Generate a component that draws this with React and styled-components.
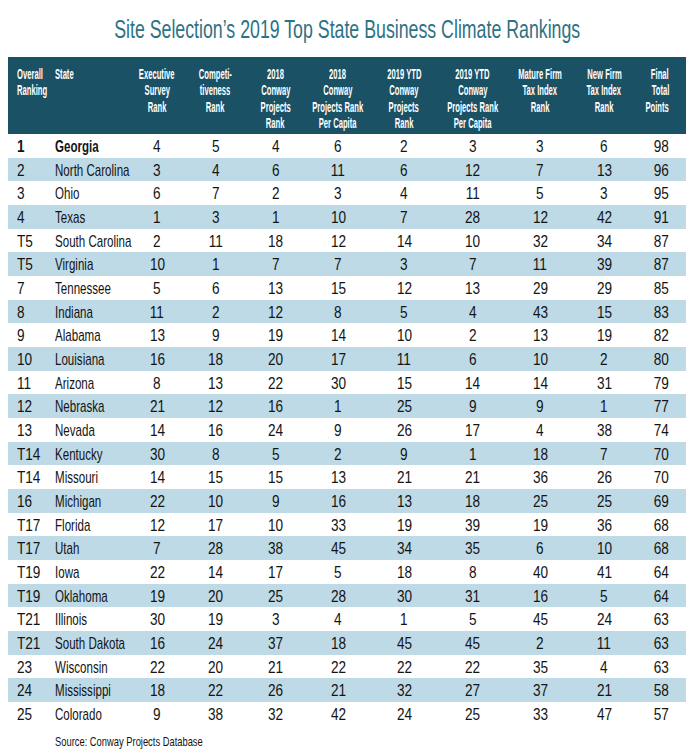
import React from 'react'
import styled, { createGlobalStyle } from 'styled-components'

const GlobalStyle = createGlobalStyle`
  html, body {
    margin: 0;
    padding: 0;
    background: #ffffff;
  }
  body {
    font-family: "Liberation Sans", Arial, sans-serif;
  }
`

const rows = [
  ['1', 'Georgia', 4, 5, 4, 6, 2, 3, 3, 6, 98],
  ['2', 'North Carolina', 3, 4, 6, 11, 6, 12, 7, 13, 96],
  ['3', 'Ohio', 6, 7, 2, 3, 4, 11, 5, 3, 95],
  ['4', 'Texas', 1, 3, 1, 10, 7, 28, 12, 42, 91],
  ['T5', 'South Carolina', 2, 11, 18, 12, 14, 10, 32, 34, 87],
  ['T5', 'Virginia', 10, 1, 7, 7, 3, 7, 11, 39, 87],
  ['7', 'Tennessee', 5, 6, 13, 15, 12, 13, 29, 29, 85],
  ['8', 'Indiana', 11, 2, 12, 8, 5, 4, 43, 15, 83],
  ['9', 'Alabama', 13, 9, 19, 14, 10, 2, 13, 19, 82],
  ['10', 'Louisiana', 16, 18, 20, 17, 11, 6, 10, 2, 80],
  ['11', 'Arizona', 8, 13, 22, 30, 15, 14, 14, 31, 79],
  ['12', 'Nebraska', 21, 12, 16, 1, 25, 9, 9, 1, 77],
  ['13', 'Nevada', 14, 16, 24, 9, 26, 17, 4, 38, 74],
  ['T14', 'Kentucky', 30, 8, 5, 2, 9, 1, 18, 7, 70],
  ['T14', 'Missouri', 14, 15, 15, 13, 21, 21, 36, 26, 70],
  ['16', 'Michigan', 22, 10, 9, 16, 13, 18, 25, 25, 69],
  ['T17', 'Florida', 12, 17, 10, 33, 19, 39, 19, 36, 68],
  ['T17', 'Utah', 7, 28, 38, 45, 34, 35, 6, 10, 68],
  ['T19', 'Iowa', 22, 14, 17, 5, 18, 8, 40, 41, 64],
  ['T19', 'Oklahoma', 19, 20, 25, 28, 30, 31, 16, 5, 64],
  ['T21', 'Illinois', 30, 19, 3, 4, 1, 5, 45, 24, 63],
  ['T21', 'South Dakota', 16, 24, 37, 18, 45, 45, 2, 11, 63],
  ['23', 'Wisconsin', 22, 20, 21, 22, 22, 22, 35, 4, 63],
  ['24', 'Mississippi', 18, 22, 26, 21, 32, 27, 37, 21, 58],
  ['25', 'Colorado', 9, 38, 32, 42, 24, 25, 33, 47, 57],
]

const headers = [
  ['Overall', 'Ranking'],
  ['State'],
  ['Executive', 'Survey', 'Rank'],
  ['Competi-', 'tiveness', 'Rank'],
  ['2018', 'Conway', 'Projects', 'Rank'],
  ['2018', 'Conway', 'Projects Rank', 'Per Capita'],
  ['2019 YTD', 'Conway', 'Projects', 'Rank'],
  ['2019 YTD', 'Conway', 'Projects Rank', 'Per Capita'],
  ['Mature Firm', 'Tax Index', 'Rank'],
  ['New Firm', 'Tax Index', 'Rank'],
  ['Final', 'Total', 'Points'],
]

const GRID = '42px 78px 58px 59px 61px 64px 68px 69px 66px 62px 51px'

// first two columns read from the left, the points column from the right
const alignOf = (j) => (j < 2 ? 'left' : j === 10 ? 'right' : 'center')
const padOf = (j) => (j === 0 ? '0 0 0 9px' : j === 1 ? '0 0 0 5px' : j === 10 ? '0 17px 0 0' : '0')
const flexOf = { left: 'flex-start', center: 'center', right: 'flex-end' }

const Page = styled.div`
  width: 690px;
  height: 754px;
  padding-left: 8px;
  box-sizing: border-box;
  overflow: hidden;
`

// condensed look: the installed fonts have no narrow cut, so squeeze horizontally
const Narrow = styled.span`
  display: inline-block;
  white-space: nowrap;
  transform: scaleX(${(p) => p.$scale});
  transform-origin: ${(p) => p.$align || 'center'} center;
`

const TitleBar = styled.div`
  height: 57px;
  width: 678px;
  display: flex;
  align-items: center;
  justify-content: center;
`

const TitleText = styled(Narrow)`
  font-size: 25px;
  line-height: 26px;
  color: #2e7285;
`

const Table = styled.div`
  width: 678px;
  overflow: hidden;
`

const HeaderBar = styled.div`
  display: grid;
  grid-template-columns: ${GRID};
  height: 77px;
  background: #1a5165;
`

const HeadCell = styled.div`
  display: flex;
  flex-direction: column;
  align-items: ${(p) => flexOf[p.$align]};
  padding: ${(p) => p.$pad};
  padding-top: 9px;
  color: #ffffff;
  font-weight: bold;
  font-size: 14px;
  line-height: 16.4px;
`

const Row = styled.div`
  display: grid;
  grid-template-columns: ${GRID};
  height: 23.68px;
  background: ${(p) => (p.$shaded ? '#bedae7' : '#ffffff')};
`

const Cell = styled.div`
  display: flex;
  align-items: center;
  justify-content: ${(p) => flexOf[p.$align]};
  padding: ${(p) => p.$pad};
  padding-top: 2px;
  font-size: 17px;
  line-height: 18px;
  color: #141414;
  font-weight: ${(p) => (p.$bold ? 'bold' : 'normal')};
`

const Source = styled.div`
  padding: 9px 0 0 47px;
  font-size: 13px;
  line-height: 14px;
  color: #141414;
`

export default function App() {
  return (
    <Page>
      <GlobalStyle />
      <TitleBar>
        <TitleText $scale={0.71}>Site Selection’s 2019 Top State Business Climate Rankings</TitleText>
      </TitleBar>
      <Table>
        <HeaderBar>
          {headers.map((lines, i) => (
            <HeadCell key={i} $align={alignOf(i)} $pad={padOf(i)}>
              {lines.map((l) => (
                <Narrow key={l} $scale={0.545} $align={alignOf(i)}>
                  {l}
                </Narrow>
              ))}
            </HeadCell>
          ))}
        </HeaderBar>
        {rows.map((r, i) => (
          <Row key={r[1]} $shaded={i % 2 === 1}>
            {r.map((v, j) => (
              <Cell key={j} $align={alignOf(j)} $pad={padOf(j)} $bold={i === 0 && j < 2}>
                <Narrow $scale={j === 1 ? 0.68 : 0.8} $align={alignOf(j)}>
                  {v}
                </Narrow>
              </Cell>
            ))}
          </Row>
        ))}
      </Table>
      <Source>
        <Narrow $scale={0.72} $align="left">
          Source: Conway Projects Database
        </Narrow>
      </Source>
    </Page>
  )
}
